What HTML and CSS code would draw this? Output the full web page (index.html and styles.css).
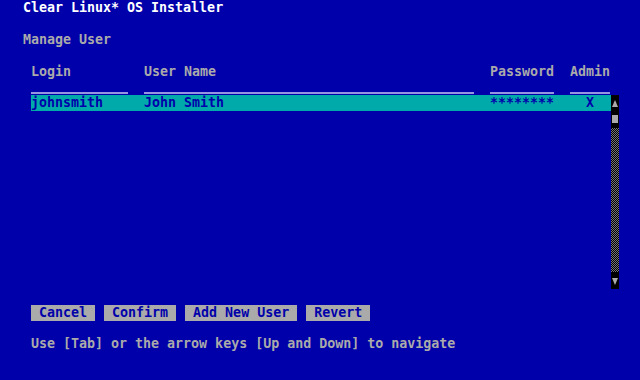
FILE: index.html
```html
<!DOCTYPE html>
<html lang="en">
<head>
    <meta charset="UTF-8">
    <meta name="viewport" content="width=device-width, initial-scale=1.0">
    <title>Clear Linux* OS Installer</title>
    <link rel="stylesheet" href="styles.css">
</head>
<body>
    <div class="screen">
        <h1 class="title">Clear Linux* OS Installer</h1>
        <h2 class="page-name">Manage User</h2>

        <div class="users">
            <div class="cols users-head">
                <div class="head-cell">Login</div>
                <div class="head-cell">User Name</div>
                <div class="head-cell">Password</div>
                <div class="head-cell">Admin</div>
            </div>

            <div class="users-body">
                <div class="users-list">
                    <div class="cols user-row selected">
                        <div>johnsmith</div>
                        <div>John Smith</div>
                        <div>********</div>
                        <div class="admin-cell">X</div>
                    </div>
                </div>

                <div class="scrollbar">
                    <div class="scroll-arrow">
                        <svg width="6" height="7" viewBox="0 0 6 7"><polygon points="3,0 6,7 0,7" fill="#aaaaaa"/></svg>
                    </div>
                    <div class="scroll-thumb"></div>
                    <div class="scroll-track"></div>
                    <div class="scroll-arrow">
                        <svg width="6" height="7" viewBox="0 0 6 7"><polygon points="0,0 6,0 3,7" fill="#aaaaaa"/></svg>
                    </div>
                </div>
            </div>
        </div>

        <div class="buttons">
            <button class="btn">Cancel</button>
            <button class="btn">Confirm</button>
            <button class="btn">Add New User</button>
            <button class="btn">Revert</button>
        </div>

        <p class="help">Use [Tab] or the arrow keys [Up and Down] to navigate</p>
    </div>
</body>
</html>
```

FILE: styles.css
```css
body {
    margin: 0;
    background-color: #0000aa;
    color: #aaaaaa;
    font-family: "DejaVu Sans Mono", "Liberation Mono", monospace;
    font-size: 13.3px;
    font-weight: bold;
    line-height: 16px;
}

.screen {
    height: 380px;
    padding-left: 23px;
    overflow: hidden;
}

.title {
    margin: 0 0 16px;
    font-size: inherit;
    color: #ffffff;
}

.page-name {
    margin: 0 0 16px;
    font-size: inherit;
    font-weight: inherit;
}

.users {
    margin-left: 8px;
}

.cols {
    display: grid;
    grid-template-columns: 97px 330px 64px 40px;
    column-gap: 16px;
}

.users-head {
    width: 579px;
    margin-bottom: 1px;
}

.head-cell {
    height: 28px;
    border-bottom: 2px solid #9494e0;
}

.users-body {
    display: flex;
    height: 194px;
}

.users-list {
    width: 580px;
}

.user-row {
    height: 16px;
}

.selected {
    background-color: #00aaaa;
    color: #0000aa;
}

.admin-cell {
    text-align: center;
}

.scrollbar {
    width: 8px;
    background-color: #000;
    display: flex;
    flex-direction: column;
}

.scroll-arrow {
    height: 16px;
    display: flex;
    align-items: center;
    justify-content: center;
}

.scroll-arrow svg {
    display: block;
}

.scroll-thumb {
    width: 6px;
    height: 8px;
    margin: 4px auto;
    background-color: #aaaaaa;
}

.scroll-track {
    flex: 1;
    margin: 1px 0;
    background: repeating-conic-gradient(#777 0 25%, #000 0 50%) 0 0 / 2px 2px;
}

.buttons {
    display: flex;
    gap: 9px;
    margin: 16px 0 0 8px;
}

.btn {
    height: 16px;
    padding: 0 8px;
    border: none;
    border-radius: 0;
    background-color: #aaaaaa;
    color: #0000aa;
    font: inherit;
    line-height: 16px;
}

.help {
    margin: 15px 0 0 8px;
}
```
